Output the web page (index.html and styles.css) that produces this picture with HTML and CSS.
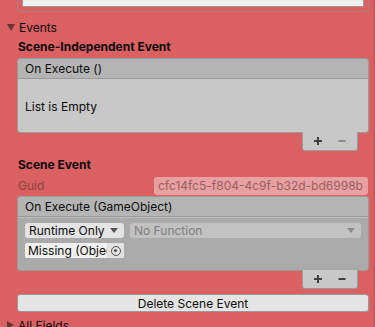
FILE: index.html
```html
<!DOCTYPE html>
<html lang="en">
<head>
    <meta charset="UTF-8">
    <meta name="viewport" content="width=device-width, initial-scale=1.0">
    <title>Inspector - Events</title>
    <link rel="stylesheet" href="styles.css">
</head>
<body>

    <div class="inspector">
        <div class="top-box">
            <div class="top-field"></div>
        </div>

        <div class="foldout">
            <span class="arrow-down"></span>
            <span>Events</span>
        </div>

        <div class="section-label">Scene-Independent Event</div>
        <div class="event-box first">
            <div class="event-header">On Execute ()</div>
            <div class="event-body empty">List is Empty</div>
        </div>
        <div class="footer-row">
            <div class="list-footer">
                <svg class="icon" width="10" height="10" viewBox="0 0 10 10"><path d="M5 1v8M1 5h8" stroke="#404040" stroke-width="2"/></svg>
                <svg class="icon" width="10" height="10" viewBox="0 0 10 10"><path d="M1.5 5h7" stroke="#8c8c8c" stroke-width="2"/></svg>
            </div>
        </div>

        <div class="section-label scene">Scene Event</div>
        <div class="guid-row">
            <span class="guid-label">Guid</span>
            <span class="guid-field">cfc14fc5-f804-4c9f-b32d-bd6998b</span>
        </div>
        <div class="event-box second">
            <div class="event-header">On Execute (GameObject)</div>
            <div class="event-body filled">
                <div class="call-row">
                    <div class="dropdown runtime">
                        <span>Runtime Only</span>
                        <span class="caret"></span>
                    </div>
                    <div class="dropdown function">
                        <span>No Function</span>
                        <span class="caret"></span>
                    </div>
                </div>
                <div class="object-field">
                    <span class="object-name">Missing (Object)</span>
                    <span class="picker-area"><span class="picker"></span></span>
                </div>
            </div>
        </div>
        <div class="footer-row">
            <div class="list-footer">
                <svg class="icon" width="10" height="10" viewBox="0 0 10 10"><path d="M5 1v8M1 5h8" stroke="#404040" stroke-width="2"/></svg>
                <svg class="icon" width="10" height="10" viewBox="0 0 10 10"><path d="M1.5 5h7" stroke="#404040" stroke-width="2"/></svg>
            </div>
        </div>

        <button class="delete-btn">Delete Scene Event</button>

        <div class="foldout closed">
            <span class="arrow-right"></span>
            <span>All Fields</span>
        </div>
    </div>

</body>
</html>
```

FILE: styles.css
```css
body {
    margin: 0;
    padding: 0;
    background-color: #da6062;
    font-family: Inter, "Noto Sans", sans-serif;
    font-size: 12px;
    color: #0c0c0c;
    overflow: hidden;
}

.inspector {
    width: 375px;
    height: 327px;
    border-right: 2px solid #c95b5c;
    box-sizing: border-box;
}

.top-box {
    margin-left: 17px;
    width: 352px;
    height: 12px;
    box-sizing: border-box;
    border: 1px solid #a98081;
    border-top: none;
    border-radius: 0 0 3px 3px;
    padding: 0 4px;
}

.top-field {
    height: 6px;
    background-color: #f0f0f0;
    border: 1px solid #999;
    border-top: none;
    border-radius: 0 0 2px 2px;
}

.foldout {
    display: flex;
    align-items: center;
    height: 18px;
    margin-top: 6px;
    padding-left: 7px;
    gap: 4px;
}

.arrow-down {
    width: 0;
    height: 0;
    border-left: 4px solid transparent;
    border-right: 4px solid transparent;
    border-top: 7px solid #6b3233;
}

.arrow-right {
    width: 0;
    height: 0;
    border-top: 4px solid transparent;
    border-bottom: 4px solid transparent;
    border-left: 7px solid #6b3233;
}

.foldout.closed {
    margin-top: 4px;
}

.section-label {
    font-weight: bold;
    height: 18px;
    line-height: 18px;
    margin-top: 2px;
    padding-left: 18px;
}

.section-label.scene {
    margin-top: 5px;
}

.event-box {
    margin-left: 17px;
    width: 352px;
    box-sizing: border-box;
    border: 1px solid #9a9a9a;
    border-radius: 3px;
    overflow: hidden;
}

.event-box.first {
    margin-top: 2px;
}

.event-box.second {
    margin-top: 1px;
}

.event-header {
    height: 19px;
    line-height: 19px;
    padding-left: 7px;
    background-color: #b4b4b4;
    border-bottom: 1px solid #9a9a9a;
}

.event-body {
    background-color: #c8c8c8;
}

.event-body.empty {
    height: 53px;
    line-height: 56px;
    padding-left: 7px;
}

.event-body.filled {
    height: 53px;
    background-color: #aaaaaa;
    border-top: 1px solid #bdbdbd;
    padding: 5px 7px 0 7px;
    box-sizing: border-box;
}

.footer-row {
    display: flex;
    justify-content: flex-end;
    width: 358px;
}

.list-footer {
    display: flex;
    align-items: center;
    gap: 14px;
    width: 56px;
    height: 19px;
    margin-top: -1px;
    padding-left: 10px;
    box-sizing: border-box;
    background-color: #c8c8c8;
    border: 1px solid #9a9a9a;
    border-top: none;
    border-radius: 0 0 3px 3px;
}

.icon {
    display: block;
}

.guid-row {
    display: flex;
    align-items: center;
    height: 19px;
    margin-top: 2px;
    padding-left: 18px;
}

.guid-label {
    width: 136px;
    color: #8e4546;
}

.guid-field {
    width: 214px;
    height: 18px;
    line-height: 18px;
    padding-left: 4px;
    box-sizing: border-box;
    background-color: #e8a0a1;
    border-radius: 3px;
    color: #9b5f60;
    white-space: nowrap;
    overflow: hidden;
}

.call-row {
    display: flex;
    gap: 6px;
}

.dropdown {
    display: flex;
    justify-content: space-between;
    align-items: center;
    height: 15px;
    padding: 0 6px 0 4px;
    border-radius: 3px;
}

.dropdown.runtime {
    width: 99px;
    box-sizing: border-box;
    background-color: #e4e4e4;
}

.dropdown.function {
    flex: 1;
    background-color: #c2c2c2;
    color: #7f7f7f;
}

.caret {
    width: 0;
    height: 0;
    border-left: 4px solid transparent;
    border-right: 4px solid transparent;
    border-top: 5px solid #555;
}

.dropdown.function .caret {
    border-top-color: #8a8a8a;
}

.object-field {
    display: flex;
    align-items: center;
    width: 99px;
    height: 15px;
    margin-top: 5px;
    box-sizing: border-box;
    background-color: #f0f0f0;
    border-radius: 2px;
    overflow: hidden;
}

.object-name {
    width: 82px;
    padding-left: 3px;
    box-sizing: border-box;
    white-space: nowrap;
    overflow: hidden;
}

.picker-area {
    display: flex;
    align-items: center;
    justify-content: center;
    width: 17px;
    height: 15px;
    background-color: #e2e2e2;
}

.picker {
    position: relative;
    width: 10px;
    height: 10px;
    border: 1px solid #555;
    border-radius: 50%;
    box-sizing: border-box;
}

.picker::after {
    content: "";
    position: absolute;
    left: 2.5px;
    top: 2.5px;
    width: 3px;
    height: 3px;
    border-radius: 50%;
    background-color: #555;
}

.delete-btn {
    display: block;
    margin: 5px 0 0 17px;
    width: 352px;
    height: 18px;
    padding: 0;
    background-color: #e4e4e4;
    border: 1px solid #999;
    border-radius: 3px;
    font-family: Inter, "Noto Sans", sans-serif;
    font-size: 12px;
    color: #0c0c0c;
}
```
